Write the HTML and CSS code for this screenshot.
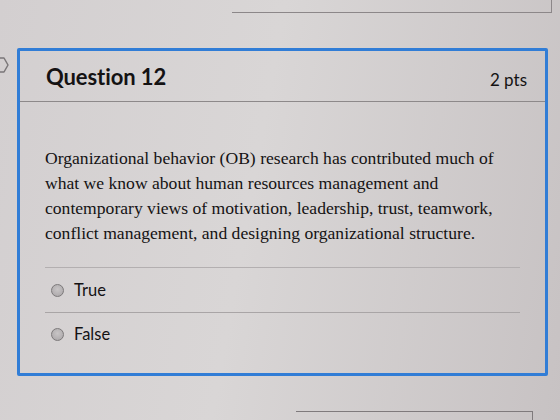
FILE: index.html
```html
<!DOCTYPE html>
<html lang="en">
  <head>
    <meta charset="UTF-8" />
    <meta name="viewport" content="width=device-width, initial-scale=1.0" />
    <title>Quiz</title>
    <link rel="stylesheet" href="styles.css">
  </head>
  <body>
    <!-- end of the previous question -->
    <div class="prev-question"></div>

    <div class="question-row">
      <div class="gutter">
        <svg class="flag" width="10" height="18" viewBox="0 0 10 18">
          <polyline points="0,2 4,2 8,9 4,16 0,16" fill="none" stroke="#7a7678" stroke-width="1.5" stroke-linejoin="round" />
        </svg>
      </div>

      <div class="question">
        <div class="question-header">
          <h2>Question 12</h2>
          <span class="points">2 pts</span>
        </div>

        <div class="question-text">
          Organizational behavior (OB) research has contributed much of<br>
          what we know about human resources management and<br>
          contemporary views of motivation, leadership, trust, teamwork,<br>
          conflict management, and designing organizational structure.
        </div>

        <div class="answers">
          <label class="answer">
            <span class="radio"></span>
            True
          </label>
          <label class="answer">
            <span class="radio"></span>
            False
          </label>
        </div>
      </div>
    </div>

    <!-- start of the next question -->
    <div class="next-question"></div>
  </body>
</html>
```

FILE: styles.css
```css
/* Page */
body {
  margin: 0;
  height: 420px;
  overflow: hidden;
  background: linear-gradient(100deg, #d3cfd0 0%, #d9d6d6 45%, #c7c2c3 100%);
  color: #141213;
  font-family: Lato, "Open Sans", sans-serif;
}

/* Neighbouring question cards */
.prev-question {
  margin-left: 232px;
  width: 319px;
  height: 12px;
  border-right: 1px solid #8c8789;
  border-bottom: 1px solid #8c8789;
}

.next-question {
  margin-top: 35px;
  margin-left: 296px;
  width: 236px;
  height: 10px;
  border-top: 1px solid #7f7a7c;
  border-right: 1px solid #7f7a7c;
}

/* Current question */
.question-row {
  display: flex;
  margin-top: 35px;
}

.gutter {
  width: 17px;
}

.flag {
  display: block;
  margin-top: 8px;
}

.question {
  width: 531px;
  height: 328px;
  box-sizing: border-box;
  border: 3px solid #317dd6;
  border-radius: 2px;
}

.question-header {
  height: 50px;
  display: flex;
  justify-content: space-between;
  align-items: center;
  padding: 0 18px 0 26px;
  border-bottom: 1px solid #8d898a;
}

.question-header h2 {
  margin: 0;
  font-size: 22px;
  font-weight: 700;
  letter-spacing: -0.1px;
}

.points {
  font-size: 17px;
  margin-top: 6px;
}

.question-text {
  padding: 44px 0 0 25px;
  font-family: "Liberation Serif", "Times New Roman", serif;
  font-size: 17.6px;
  line-height: 25px;
  height: 121px;
}

/* Answers */
.answers {
  margin: 0 25px 0 25px;
}

.answer {
  display: flex;
  align-items: center;
  gap: 10px;
  height: 44px;
  padding-left: 6px;
  border-top: 1px solid #b3afb0;
  font-size: 16.5px;
}

.answer:last-child {
  height: 42px;
  border-top-color: #a9a5a6;
}

.radio {
  width: 11px;
  height: 11px;
  border-radius: 50%;
  border: 1px solid #7c797a;
  background: radial-gradient(circle at 50% 40%, #c8c5c6 0%, #a8a4a6 100%);
}
```
